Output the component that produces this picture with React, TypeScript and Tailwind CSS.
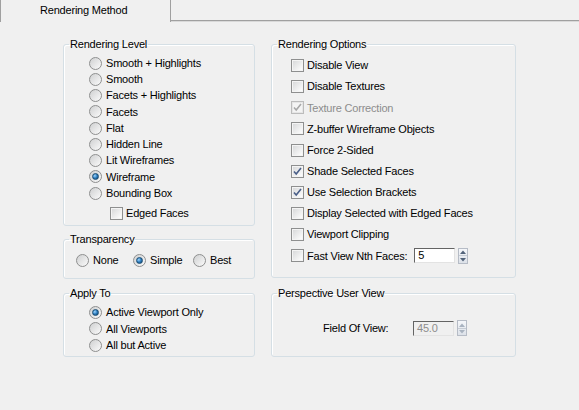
type RadioProps = {
    label: string;
    checked?: boolean;
};

function Radio({ label, checked }: RadioProps) {
    return (
        <div className="flex items-center gap-[4px]">
            <span className="w-[13px] h-[13px] rounded-full border border-[#8e8f8f] bg-linear-to-br from-[#cfd0d1] to-[#fbfbfb] flex items-center justify-center shrink-0">
                {checked && (
                    <span className="w-[7px] h-[7px] rounded-full border border-[#1b4d73] bg-radial-[at_35%_35%] from-[#9fd6ff] via-[#2a7bbd] to-[#123f66]" />
                )}
            </span>
            <span>{label}</span>
        </div>
    );
}

type CheckProps = {
    label: string;
    checked?: boolean;
    disabled?: boolean;
};

function Check({ label, checked, disabled }: CheckProps) {
    return (
        <div className="flex items-center gap-[3px]">
            <span
                className={`w-[13px] h-[13px] border flex items-center justify-center shrink-0 ${
                    disabled ? "border-[#bcbcbc]" : "border-[#8e8f8f]"
                }`}
            >
                <span
                    className={`w-[11px] h-[11px] border ${
                        disabled
                            ? "border-[#e6e6e6] bg-[#f4f4f4]"
                            : "border-[#f4f4f4] bg-linear-to-br from-[#d9dadb] to-[#fdfdfd]"
                    } flex items-center justify-center`}
                >
                    {checked && (
                        <svg width="9" height="9" viewBox="0 0 9 9">
                            <path
                                d="M1 4.5 L3.2 7 L8 1"
                                fill="none"
                                stroke={disabled ? "#a8a8a8" : "#4a5f88"}
                                strokeWidth="1.6"
                            />
                        </svg>
                    )}
                </span>
            </span>
            <span className={disabled ? "text-[#8d8d8d]" : ""}>{label}</span>
        </div>
    );
}

function Spinner({ disabled }: { disabled?: boolean }) {
    const arrow = disabled ? "#a9b3c0" : "#52637a";
    return (
        <div className="w-[10px] h-[16px] flex flex-col border border-[#b6bcc6] bg-linear-to-b from-[#f5f7fa] to-[#dde2e9]">
            <div className="flex-1 flex items-center justify-center border-b border-[#c6ccd4]">
                <svg width="6" height="4" viewBox="0 0 6 4">
                    <path d="M0 4 L3 0.5 L6 4 Z" fill={arrow} />
                </svg>
            </div>
            <div className="flex-1 flex items-center justify-center">
                <svg width="6" height="4" viewBox="0 0 6 4">
                    <path d="M0 0 L3 3.5 L6 0 Z" fill={arrow} />
                </svg>
            </div>
        </div>
    );
}

function SpinEdit({ value, disabled }: { value: string; disabled?: boolean }) {
    return (
        <div className="flex items-center gap-[3px]">
            <div
                className={`w-[41px] h-[15px] border-t border-l border-[#646464] border-r border-b border-r-[#e3e3e3] border-b-[#e3e3e3] flex items-center pl-[3px] leading-none ${
                    disabled ? "bg-[#f0f0f0] text-[#8d8d8d]" : "bg-white"
                }`}
            >
                {value}
            </div>
            <Spinner disabled={disabled} />
        </div>
    );
}

type GroupProps = {
    title: string;
    className?: string;
    children: React.ReactNode;
};

function GroupBox({ title, className, children }: GroupProps) {
    return (
        <fieldset
            className={`border border-[#d5dfe5] rounded-[3px] shadow-[inset_1px_1px_0_#ffffff] ${className ?? ""}`}
        >
            <legend className="ml-[5px] px-[1px] leading-[13px]">{title}</legend>
            {children}
        </fieldset>
    );
}

const renderLevels = [
    "Smooth + Highlights",
    "Smooth",
    "Facets + Highlights",
    "Facets",
    "Flat",
    "Hidden Line",
    "Lit Wireframes",
    "Wireframe",
    "Bounding Box",
];

const renderOptions = [
    { label: "Disable View" },
    { label: "Disable Textures" },
    { label: "Texture Correction", checked: true, disabled: true },
    { label: "Z-buffer Wireframe Objects" },
    { label: "Force 2-Sided" },
    { label: "Shade Selected Faces", checked: true },
    { label: "Use Selection Brackets", checked: true },
    { label: "Display Selected with Edged Faces" },
    { label: "Viewport Clipping" },
];

export default function App() {
    return (
        <div className="w-[579px] h-[410px] bg-[#f0f0f0] overflow-hidden text-[11px] tracking-[-0.2px] text-black font-['Liberation_Sans',Arial,sans-serif]">

            {/* Tab strip */}
            <div className="flex h-[22px]">
                <div className="w-[171px] border-l border-r border-[#a0a0a0] bg-[#f0f0f0] flex items-center pl-[39px] pb-[1px]">
                    Rendering Method
                </div>
                <div className="flex-1 flex flex-col justify-end">
                    <div className="h-[1px] bg-[#a0a0a0]" />
                    <div className="h-[1px] bg-[#d9d9d9]" />
                </div>
            </div>

            {/* Panels */}
            <div className="flex gap-[16px] pl-[63px] pt-[16px]">

                {/* Left column */}
                <div className="w-[192px] flex flex-col">
                    <GroupBox title="Rendering Level" className="h-[188px]">
                        <div className="pl-[25px] pt-[4px]">
                            {renderLevels.map((r) => (
                                <div key={r} className="h-[16.25px] flex items-center">
                                    <Radio label={r} checked={r === "Wireframe"} />
                                </div>
                            ))}
                        </div>
                        <div className="pl-[46px] mt-[4px]">
                            <Check label="Edged Faces" />
                        </div>
                    </GroupBox>

                    <GroupBox title="Transparency" className="mt-[7px] h-[46px]">
                        <div className="flex pl-[12px] pt-[6px] items-center">
                            <div className="w-[57px]"><Radio label="None" /></div>
                            <div className="w-[60px]"><Radio label="Simple" checked /></div>
                            <Radio label="Best" />
                        </div>
                    </GroupBox>

                    <GroupBox title="Apply To" className="mt-[8px] h-[70px]">
                        <div className="pl-[25px] pt-[4px]">
                            <div className="h-[16.5px] flex items-center"><Radio label="Active Viewport Only" checked /></div>
                            <div className="h-[16.5px] flex items-center"><Radio label="All Viewports" /></div>
                            <div className="h-[16.5px] flex items-center"><Radio label="All but Active" /></div>
                        </div>
                    </GroupBox>
                </div>

                {/* Right column */}
                <div className="w-[245px] flex flex-col">
                    <GroupBox title="Rendering Options" className="h-[240px]">
                        <div className="pl-[19px] pt-[4px]">
                            {renderOptions.map((o) => (
                                <div key={o.label} className="h-[21.15px] flex items-center">
                                    <Check label={o.label} checked={o.checked} disabled={o.disabled} />
                                </div>
                            ))}
                            <div className="h-[21.15px] flex items-center">
                                <Check label="Fast View Nth Faces:" />
                                <div className="ml-[7px]">
                                    <SpinEdit value="5" />
                                </div>
                            </div>
                        </div>
                    </GroupBox>

                    <GroupBox title="Perspective User View" className="mt-[9px] h-[70px]">
                        <div className="flex items-center pl-[51px] pt-[20px]">
                            <span className="w-[90px]">Field Of View:</span>
                            <SpinEdit value="45.0" disabled />
                        </div>
                    </GroupBox>
                </div>
            </div>
        </div>
    );
}
